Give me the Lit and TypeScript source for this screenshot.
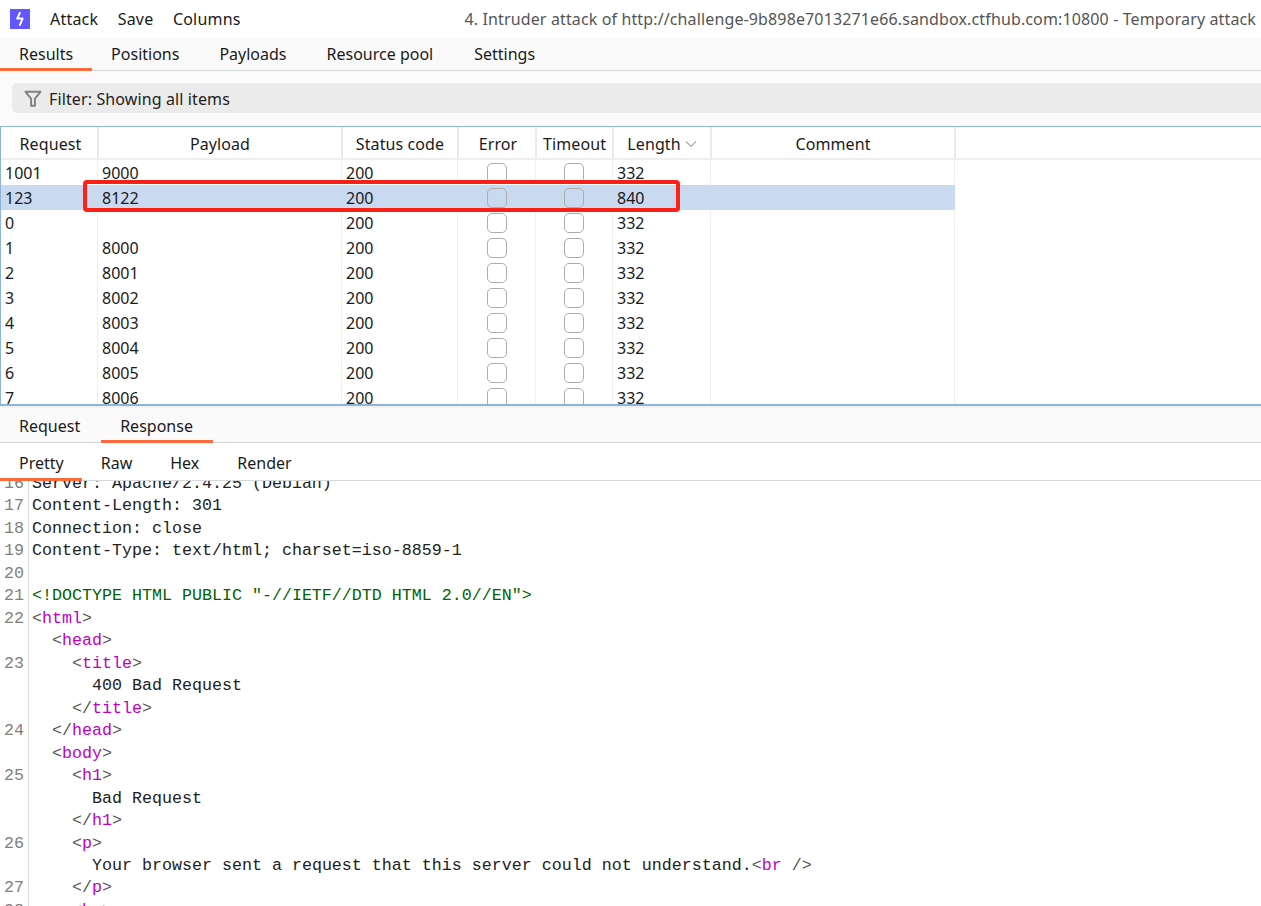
import { LitElement, html, css } from "lit";
import { customElement } from "lit/decorators.js";

const rows = [
  ["1001", "9000", "200", "332"],
  ["123", "8122", "200", "840"],
  ["0", "", "200", "332"],
  ["1", "8000", "200", "332"],
  ["2", "8001", "200", "332"],
  ["3", "8002", "200", "332"],
  ["4", "8003", "200", "332"],
  ["5", "8004", "200", "332"],
  ["6", "8005", "200", "332"],
  ["7", "8006", "200", "332"],
];

const t = (s: string) => html`<span class="p">&lt;</span><span class="n">${s}</span><span class="p">&gt;</span>`;
const c = (s: string) => html`<span class="p">&lt;/</span><span class="n">${s}</span><span class="p">&gt;</span>`;
const doctype = '<!DOCTYPE HTML PUBLIC "-//IETF//DTD HTML 2.0//EN">';

const lines: [string, number, unknown][] = [
  ["16", 0, "Server: Apache/2.4.25 (Debian)"],
  ["17", 0, "Content-Length: 301"],
  ["18", 0, "Connection: close"],
  ["19", 0, "Content-Type: text/html; charset=iso-8859-1"],
  ["20", 0, ""],
  ["21", 0, html`<span class="g">${doctype}</span>`],
  ["22", 0, t("html")],
  ["", 1, t("head")],
  ["23", 2, t("title")],
  ["", 3, "400 Bad Request"],
  ["", 2, c("title")],
  ["24", 1, c("head")],
  ["", 1, t("body")],
  ["25", 2, t("h1")],
  ["", 3, "Bad Request"],
  ["", 2, c("h1")],
  ["26", 2, t("p")],
  ["", 3, html`Your browser sent a request that this server could not understand.<span class="p">&lt;</span><span class="n">br</span><span class="p"> /&gt;</span>`],
  ["27", 2, c("p")],
  ["28", 2, t("hr")],
];

@customElement("app-root")
export class AppRoot extends LitElement {
  static styles = css`
    :host {
      display: block;
      width: 1261px;
      height: 906px;
      overflow: hidden;
      background: #fff;
      color: #1a1a1a;
      font-family: "Noto Sans", "Liberation Sans", sans-serif;
      font-size: 16px;
    }
    .top {
      height: 38px;
      display: flex;
      align-items: center;
      padding: 0 5px 0 10px;
      white-space: nowrap;
    }
    .logo { width: 20px; height: 20px; margin-right: 20px; display: block; }
    .menu { margin-right: 19.5px; letter-spacing: 0.2px; }
    .title { margin-left: auto; color: #555; letter-spacing: 0.13px; }
    .tabs {
      display: flex;
      background: #fafafa;
      border-bottom: 1px solid #d4d8d8;
      box-sizing: border-box;
    }
    .tabs.main { height: 33px; }
    .tabs.sec { height: 35px; }
    .tabs.sub { height: 38px; background: #fff; }
    .tab {
      display: flex;
      align-items: center;
      padding: 1px 20px 0;
      margin-bottom: -1px;
      border-bottom: 3px solid transparent;
    }
    .tab:first-child { padding-left: 19px; padding-right: 19px; }
    .main .tab:nth-child(2) { padding-left: 19px; }
    .main .tab:last-child { padding-left: 21px; }
    .tab.on { border-bottom-color: #ff6a3c; }
    .sec .tab { padding: 3px 20px 0 19px; }
    .sec .tab:first-child { padding-right: 21px; }
    .sub .tab { padding: 5px 19px 0; }
    .sub .tab:first-child { padding-left: 19px; padding-right: 18px; }
    .filterwrap {
      background: #fbfbfb;
      padding: 12px 0 13px 12px;
    }
    .filter {
      height: 30px;
      background: #ebebeb;
      border-radius: 5px 0 0 5px;
      display: flex;
      align-items: center;
      gap: 7px;
      padding: 1px 0 0 12px;
      box-sizing: border-box;
      color: #222;
      letter-spacing: 0.12px;
    }
    .filter svg { display: block; }
    .table {
      position: relative;
      height: 280px;
      box-sizing: border-box;
      border-top: 1px solid #8db4dc;
      border-bottom: 2px solid #8db4dc;
      border-left: 1px solid #8db4dc;
      overflow: hidden;
    }
    .head, .row {
      display: grid;
      grid-template-columns: 97px 244px 116px 78px 77px 98px 244px;
      width: 954px;
    }
    .head {
      height: 33px;
      border-bottom: 2px solid #eeeeee;
      width: 1260px;
      box-sizing: border-box;
    }
    .hc {
      display: flex;
      align-items: center;
      justify-content: center;
      padding: 2px 0 0 1px;
      border-right: 2px solid #eaeaea;
      margin-right: -1px;
      color: #1a1a1a;
      gap: 4px;
      letter-spacing: 0.1px;
    }
    .hc.shift { padding-left: 3px; }
    .row {
      height: 25px;
      align-items: center;
    }
    .row.sel { background: #c8d9f0; }
    .cell {
      height: 25px;
      line-height: 25px;
      padding: 1px 0 0 4px;
      box-sizing: border-box;
      border-right: 1px solid #efefef;
      overflow: hidden;
    }
    .row.sel .cell { border-right-color: transparent; }
    .check { display: flex; justify-content: center; align-items: center; padding: 0; }
    .box {
      width: 20px;
      height: 20px;
      box-sizing: border-box;
      border: 1px solid #adadad;
      border-radius: 5px;
      background: #fff;
    }
    .row.sel .box { background: #c8d9f0; }
    .mark {
      position: absolute;
      left: 82px;
      top: 53px;
      width: 597px;
      height: 32px;
      box-sizing: border-box;
      border: 4px solid #ff2116;
      border-radius: 4px;
    }
    .split { height: 2px; background: #f2f2f2; }
    .code {
      height: 426px;
      overflow: hidden;
      font-family: "Liberation Mono", "DejaVu Sans Mono", monospace;
      font-size: 16.67px;
      color: #222;
    }
    .lines { margin-top: -8px; }
    .line { display: flex; height: 22.47px; line-height: 22.47px; white-space: pre; }
    .num {
      width: 29px;
      box-sizing: border-box;
      border-right: 1px solid #d9d9d9;
      padding-left: 4px;
      margin-right: 3px;
      color: #7f7f7f;
      flex: none;
    }
    .p { color: #555; }
    .n { color: #c000c8; }
    .g { color: #006400; }
  `;

  render() {
    return html`
      <div class="top">
        <svg class="logo" viewBox="0 0 20 20">
          <rect width="20" height="20" fill="#6257ff"></rect>
          <path d="M10.2 3.2 7.2 9.6h5.4L9.6 16.6" fill="none" stroke="#fff" stroke-width="2" stroke-linejoin="round"></path>
        </svg>
        <span class="menu">Attack</span><span class="menu">Save</span><span class="menu">Columns</span>
        <span class="title">4. Intruder attack of http://challenge-9b898e7013271e66.sandbox.ctfhub.com:10800 - Temporary attack</span>
      </div>
      <div class="tabs main">
        <div class="tab on">Results</div>
        <div class="tab">Positions</div>
        <div class="tab">Payloads</div>
        <div class="tab">Resource pool</div>
        <div class="tab">Settings</div>
      </div>
      <div class="filterwrap">
        <div class="filter">
          <svg width="18" height="18" viewBox="0 0 18 18" fill="none" stroke="#808080" stroke-width="1.9">
            <path d="M1.5 1.8h15l-5.6 6.8v7.2H7.1V8.6Z" stroke-linejoin="round"></path>
          </svg>
          Filter: Showing all items
        </div>
      </div>
      <div class="table">
        <div class="head">
          <div class="hc shift">Request</div>
          <div class="hc">Payload</div>
          <div class="hc">Status code</div>
          <div class="hc shift">Error</div>
          <div class="hc">Timeout</div>
          <div class="hc">Length
            <svg width="12" height="8" viewBox="0 0 12 8" fill="none" stroke="#aaa" stroke-width="1.2"><path d="M1 1.5l5 5 5-5"></path></svg>
          </div>
          <div class="hc">Comment</div>
        </div>
        <div class="rows">
          ${rows.map(
            (r, i) => html`<div class="row ${i === 1 ? "sel" : ""}">
              <div class="cell">${r[0]}</div>
              <div class="cell">${r[1]}</div>
              <div class="cell">${r[2]}</div>
              <div class="cell check"><div class="box"></div></div>
              <div class="cell check"><div class="box"></div></div>
              <div class="cell">${r[3]}</div>
              <div class="cell"></div>
            </div>`
          )}
        </div>
        <div class="mark"></div>
      </div>
      <div class="split"></div>
      <div class="tabs sec">
        <div class="tab">Request</div>
        <div class="tab on">Response</div>
      </div>
      <div class="tabs sub">
        <div class="tab on">Pretty</div>
        <div class="tab">Raw</div>
        <div class="tab">Hex</div>
        <div class="tab">Render</div>
      </div>
      <div class="code">
        <div class="lines">
          ${lines.map(
            ([n, lvl, content]) => html`<div class="line">
              <div class="num">${n}</div><div>${"  ".repeat(lvl)}${content}</div>
            </div>`
          )}
        </div>
      </div>
    `;
  }
}
